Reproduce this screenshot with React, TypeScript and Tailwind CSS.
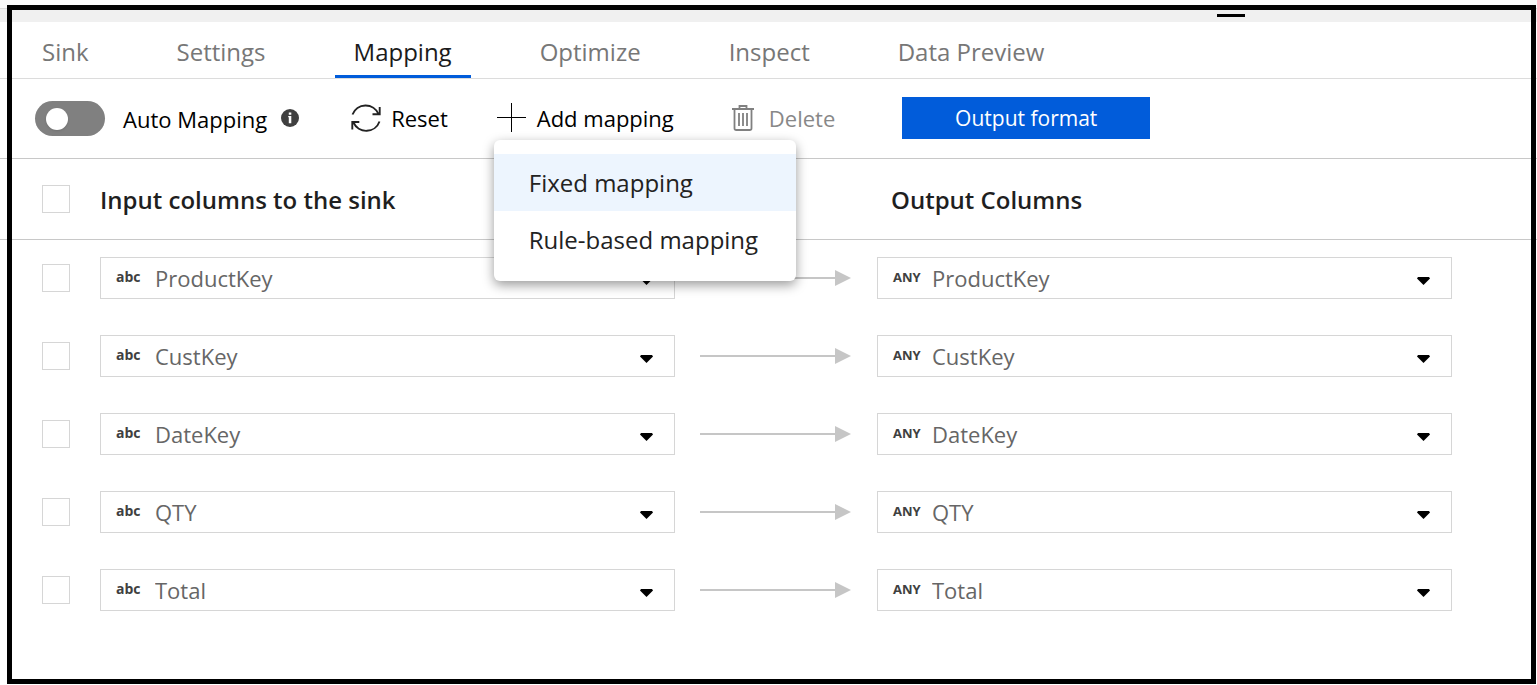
import { useState } from 'react';

const tabs = ['Sink', 'Settings', 'Mapping', 'Optimize', 'Inspect', 'Data Preview'];
const columns = ['ProductKey', 'CustKey', 'DateKey', 'QTY', 'Total'];
const menuItems = ['Fixed mapping', 'Rule-based mapping'];

function InfoIcon() {
  return (
    <svg className="h-[18px] w-[18px]" viewBox="0 0 18 18" aria-hidden="true">
      <circle cx="9" cy="9" r="9" fill="#404040" />
      <path d="M7.800 3.500h2.500v2.300H7.800zM7.200 7h3.100v7.300H7.800V8.300h-.6z" fill="#fff" />
    </svg>
  );
}

function ResetIcon() {
  return (
    <svg className="h-[30px] w-[30px]" viewBox="0 0 30 30" fill="none" stroke="#222" strokeWidth="1.900" aria-hidden="true">
      <path d="M1.500 11.500A14 14 0 0 1 27.500 11M28.700 4v7.200H21.500" />
      <path d="M28.500 18.500A14 14 0 0 1 2.500 19.500M1.300 26.500V19h7" />
    </svg>
  );
}

function PlusIcon() {
  return (
    <svg className="h-[29px] w-[29px]" viewBox="0 0 29 29" fill="none" stroke="#000" aria-hidden="true">
      <path d="M14.500 0v29M0 14.500h29" />
    </svg>
  );
}

function TrashIcon() {
  return (
    <svg className="h-[26px] w-[22px]" viewBox="0 0 22 26" fill="none" stroke="#808080" strokeWidth="1.800" aria-hidden="true">
      <path d="M0 4h22M7.500 3.500V1h7v2.500M2.500 4v19.200q0 1.800 1.800 1.800h13.400q1.800 0 1.800-1.800V4" />
      <path d="M7 8v13M11 8v13M15 8v13" />
    </svg>
  );
}

function Arrow() {
  return (
    <svg className="h-4 w-full" aria-hidden="true">
      <line x1="0" y1="8" x2="90%" y2="8" stroke="#c6c6c6" strokeWidth="2" />
      <svg x="100%" overflow="visible">
        <path d="M-16 0L0 8L-16 16z" fill="#c6c6c6" />
      </svg>
    </svg>
  );
}

function CheckBox({ label }: { label: string }) {
  return (
    <input
      type="checkbox"
      aria-label={label}
      className="h-7 w-7 appearance-none border border-[#d6d6d6] bg-white checked:bg-[#015cda]"
    />
  );
}

function ColumnSelect({ kind, value, label }: { kind: string; value: string; label: string }) {
  return (
    <div className="relative">
      <select
        aria-label={label}
        defaultValue={value}
        className="block h-[42px] w-full appearance-none border border-[#d6d6d6] bg-white pl-[54px] pr-12 text-[22px] leading-8 text-[#666]"
      >
        {columns.map((c) => (
          <option key={c}>{c}</option>
        ))}
      </select>
      <span
        className={
          kind === 'ANY'
            ? 'pointer-events-none absolute left-4 top-[10px] text-[13px] font-bold leading-5 text-[#404040]'
            : 'pointer-events-none absolute left-4 top-[10px] text-[14px] font-bold leading-5 text-[#404040]'
        }
      >
        {kind}
      </span>
      <svg className="pointer-events-none absolute right-[22px] top-5 h-2 w-[13px]" viewBox="0 0 13 8" aria-hidden="true">
        <path d="M1 0h11l1 1.500L6.500 8L0 1.500z" />
      </svg>
    </div>
  );
}

export default function App() {
  const [active, setActive] = useState('Mapping');
  const [open, setOpen] = useState(true);

  return (
    <div className="relative min-h-screen bg-white font-['Open_Sans','Noto_Sans',sans-serif] text-black">
      <div className="h-2 bg-[#fafafa]" />
      <div className="flex h-[14px] justify-end border-t border-[#dcdcdc] bg-[#f0f0f0] pr-[292px] pt-[5px]">
        <button aria-label="Minimize" className="h-[3px] w-7 bg-black" />
      </div>

      <nav className="flex h-[57px] gap-[50px] border-b border-[#dcdcdc] pl-[23px]">
        {tabs.map((t) => (
          <button
            key={t}
            onClick={() => setActive(t)}
            className={
              t === active
                ? 'border-b-[3px] border-[#015cda] px-[19px] pt-1.5 text-[24px] leading-8 text-[#1b1b1b]'
                : 'border-b-[3px] border-transparent px-[19px] pt-1.5 text-[24px] leading-8 text-[#777]'
            }
          >
            {t}
          </button>
        ))}
      </nav>

      <div className="flex h-20 items-center border-b border-[#c8c8c8] pb-0.5 pl-[35px] text-[22px] leading-8">
        <label className="flex items-center gap-[18px] pt-0.5">
          <input type="checkbox" role="switch" className="peer sr-only" />
          <span className="flex h-[35px] w-[70px] items-center rounded-full bg-[#808080] px-[11px] peer-checked:justify-end peer-checked:bg-[#015cda]">
            <span className="h-[22px] w-[22px] rounded-full bg-white shadow" />
          </span>
          Auto Mapping
        </label>
        <span className="ml-[14px]">
          <InfoIcon />
        </span>
        <button className="ml-[52px] flex items-center gap-[10px]">
          <ResetIcon />
          Reset
        </button>
        <div className="relative ml-[49px]">
          <button className="flex items-center gap-[11px]" aria-expanded={open} onClick={() => setOpen(!open)}>
            <PlusIcon />
            Add mapping
          </button>
          {open && (
            <div
              role="menu"
              className="absolute -left-[3px] top-[38px] z-10 w-[302px] rounded-md bg-white pb-[13px] pt-[14px] shadow-[0_4px_12px_rgba(0,0,0,0.4)]"
            >
              {menuItems.map((m, i) => (
                <button
                  key={m}
                  role="menuitem"
                  className={
                    i === 0
                      ? 'block h-[57px] w-full bg-[#edf5fe] px-[35px] pt-0.5 text-left text-[24px] leading-8 text-[#222]'
                      : 'block h-[57px] w-full px-[35px] pt-0.5 text-left text-[24px] leading-8 text-[#222]'
                  }
                >
                  {m}
                </button>
              ))}
            </div>
          )}
        </div>
        <button className="ml-[58px] flex items-center gap-[15px] text-[#888]">
          <TrashIcon />
          Delete
        </button>
        <button className="ml-[67px] h-[42px] w-[248px] bg-[#015cda] text-[21px] text-white">Output format</button>
      </div>

      <div className="grid h-[81px] grid-cols-[58px_1fr_202px_1fr] items-center border-b border-[#c8c8c8] pl-[42px] pr-[85px] text-[24px] font-semibold leading-8 text-[#1f1f1f]">
        <CheckBox label="Select all" />
        <h2 className="pt-0.5">Input columns to the sink</h2>
        <span />
        <h2 className="pl-[14px] pt-0.5">Output Columns</h2>
      </div>

      <div className="flex flex-col gap-9 pb-16 pl-[42px] pr-[85px] pt-[17px]">
        {columns.map((c) => (
          <div key={c} className="grid grid-cols-[58px_1fr_202px_1fr] items-center">
            <CheckBox label={`Select ${c}`} />
            <ColumnSelect kind="abc" value={c} label={`Input column ${c}`} />
            <div className="pl-[25px] pr-[26px]">
              <Arrow />
            </div>
            <ColumnSelect kind="ANY" value={c} label={`Output column ${c}`} />
          </div>
        ))}
      </div>

      <div className="pointer-events-none absolute bottom-px left-[7px] right-px top-[5px] z-20 border-[5px] border-black" />
    </div>
  );
}
